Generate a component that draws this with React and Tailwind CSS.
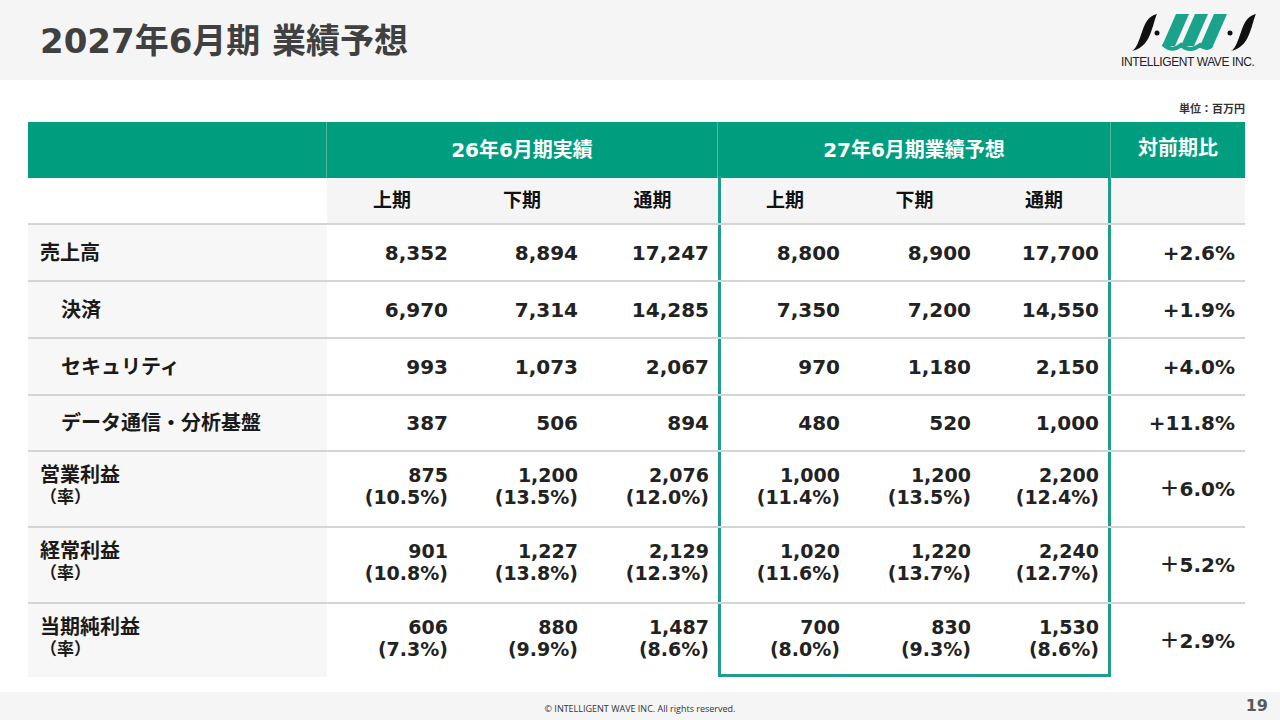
import React from 'react'

const COLS = 'grid grid-cols-[299px_130px_130px_131px_131px_131px_131px_134px]'

const rows = [
  { label: '売上高', h: 'h-[57px]', v: ['8,352', '8,894', '17,247', '8,800', '8,900', '17,700'], r: '+2.6%' },
  { label: '決済', indent: true, h: 'h-[57px]', v: ['6,970', '7,314', '14,285', '7,350', '7,200', '14,550'], r: '+1.9%' },
  { label: 'セキュリティ', indent: true, h: 'h-[57px]', v: ['993', '1,073', '2,067', '970', '1,180', '2,150'], r: '+4.0%' },
  { label: 'データ通信・分析基盤', indent: true, h: 'h-[56px]', v: ['387', '506', '894', '480', '520', '1,000'], r: '+11.8%' },
  {
    label: '営業利益', rate: true, h: 'h-[76px]',
    v: [['875', '(10.5%)'], ['1,200', '(13.5%)'], ['2,076', '(12.0%)'], ['1,000', '(11.4%)'], ['1,200', '(13.5%)'], ['2,200', '(12.4%)']],
    r: '＋6.0%',
  },
  {
    label: '経常利益', rate: true, h: 'h-[76px]',
    v: [['901', '(10.8%)'], ['1,227', '(13.8%)'], ['2,129', '(12.3%)'], ['1,020', '(11.6%)'], ['1,220', '(13.7%)'], ['2,240', '(12.7%)']],
    r: '＋5.2%',
  },
  {
    label: '当期純利益', rate: true, h: 'h-[75px]', last: true,
    v: [['606', '(7.3%)'], ['880', '(9.9%)'], ['1,487', '(8.6%)'], ['700', '(8.0%)'], ['830', '(9.3%)'], ['1,530', '(8.6%)']],
    r: '＋2.9%',
  },
]

const GREEN = '#1aa38a'

function Logo() {
  return (
    <div className='flex flex-col items-start w-[136px]'>
      <svg width='136' height='39' viewBox='1121 13 136 39'>
        {/* left slash + dot */}
        <path d='M1132,51 C1137,48 1139,40 1142,32 C1145,23 1148,16 1157,14 C1155,18 1154,24 1151,32 C1148,40 1144,48 1132,51 Z' fill='#111' />
        <circle cx='1157' cy='33' r='2.5' fill='#111' />
        {/* W */}
        <path d='M1176,14 L1189,14 L1175,46 L1162,46 Z' fill={GREEN} />
        <path d='M1195,14 L1208,14 L1194,46 L1181,46 Z' fill={GREEN} />
        <path d='M1214,14 L1227,14 L1213,46 L1200,46 Z' fill={GREEN} />
        <path d='M1163,44 Q1172,53 1181,45 Q1190,53 1200,45 Q1207,51 1212,45' stroke={GREEN} strokeWidth='4' fill='none' />
        {/* dot + right slash */}
        <circle cx='1230' cy='33' r='2.5' fill='#111' />
        <path d='M1231,51 C1236,48 1238,40 1241,32 C1244,23 1247,16 1256,14 C1254,18 1253,24 1250,32 C1247,40 1243,48 1231,51 Z' fill='#111' />
      </svg>
      <div className="mt-[4px] text-[12px] leading-none tracking-[-0.4px] text-[#222] font-['Liberation_Sans',sans-serif] font-normal whitespace-nowrap">
        INTELLIGENT WAVE INC.
      </div>
    </div>
  )
}

function NumCell({ val, teal, tealRight, last, top }) {
  const boxed = last && (teal || tealRight || top)
  let cls = 'flex flex-col items-end justify-center pr-[9px] text-[#222]'
  if (Array.isArray(val)) cls += boxed ? ' pb-[3px]' : ' pb-[6px]'
  if (teal) cls += ' border-l-[3px] border-l-[#1f9e8b]'
  if (tealRight) cls += ' border-r-[3px] border-r-[#1f9e8b] pr-[7px]'
  if (boxed) cls += ' border-b-[3px] border-b-[#1f9e8b]'
  return (
    <div className={cls}>
      {Array.isArray(val) ? (
        <>
          <span className='text-[19px] leading-[22px]'>{val[0]}</span>
          <span className='text-[19px] leading-[22px]'>{val[1]}</span>
        </>
      ) : (
        <span className='text-[20px] leading-[24px]'>{val}</span>
      )}
    </div>
  )
}

export default function App() {
  return (
    <div className="w-[1280px] h-[720px] flex flex-col bg-white font-['DejaVu_Sans','Noto_Sans_CJK_JP',sans-serif] font-bold overflow-hidden">
      {/* header */}
      <div className='h-[80px] shrink-0 bg-[#f5f5f5] flex items-center justify-between pl-[40px] pr-[23px]'>
        <h1 className='text-[34px] leading-none text-[#404040] mt-[2px]'>2027年6月期 業績予想</h1>
        <Logo />
      </div>

      <div className='h-[42px] shrink-0 flex items-end justify-end pr-[35px] pb-[7px]'>
        <span className="text-[11px] leading-[14px] text-[#333] font-['Noto_Sans_CJK_JP',sans-serif]">単位：百万円</span>
      </div>

      {/* table */}
      <div className='ml-[28px] w-[1217px]'>
        <div className={COLS + ' h-[56px] bg-[#009e7e] text-white text-[20px]'}>
          <div className='border-r border-[#4fb9a1]' />
          <div className='col-span-3 flex items-center justify-center border-r border-[#4fb9a1]'>26年6月期実績</div>
          <div className='col-span-3 flex items-center justify-center border-r border-[#4fb9a1]'>27年6月期業績予想</div>
          <div className='flex items-center justify-center pb-[4px]'>対前期比</div>
        </div>

        <div className={COLS + ' h-[45px] text-[19px] text-[#111]'}>
          <div className='bg-white' />
          {['上期', '下期', '通期'].map((t) => (
            <div key={'a' + t} className='bg-[#f5f5f5] flex items-center justify-center'>{t}</div>
          ))}
          {['上期', '下期', '通期'].map((t, i) => (
            <div
              key={'b' + t}
              className={
                'bg-[#f5f5f5] flex items-center justify-center' +
                (i === 0 ? ' border-l-[3px] border-l-[#1f9e8b]' : '') +
                (i === 2 ? ' border-r-[3px] border-r-[#1f9e8b]' : '')
              }
            >
              {t}
            </div>
          ))}
          <div className='bg-[#f5f5f5]' />
        </div>

        {rows.map((row) => (
          <div key={row.label} className={COLS + ' ' + row.h + ' border-t-2 border-[#d4d4d4]'}>
            <div className={'bg-[#f7f7f7] flex flex-col justify-center text-[#1a1a1a] ' + (row.indent ? 'pl-[33px]' : 'pl-[12px]') + (row.rate ? ' pb-[6px]' : '')}>
              {row.rate ? (
                <>
                  <span className='text-[20px] leading-[22px]'>{row.label}</span>
                  <span className='text-[17px] leading-[22px]'>（率）</span>
                </>
              ) : (
                <span className='text-[20px] leading-[24px]'>{row.label}</span>
              )}
            </div>
            {row.v.map((val, i) => (
              <NumCell
                key={i}
                val={val}
                teal={i === 3}
                tealRight={i === 5}
                top={i === 4}
                last={row.last}
              />
            ))}
            <div className='flex items-center justify-end pr-[10px] text-[20px] text-[#222]'>{row.r}</div>
          </div>
        ))}
      </div>

      <div className='flex-1' />

      {/* footer */}
      <div className='h-[28px] shrink-0 bg-[#f5f5f5] grid grid-cols-[1fr_auto_1fr] items-center'>
        <div />
        <div className="text-[9px] font-normal text-[#333] font-['Open_Sans',sans-serif] pt-[6px]">© INTELLIGENT WAVE INC. All rights reserved.</div>
        <div className='flex justify-end pr-[12px] text-[16px] text-[#595959]'>19</div>
      </div>
    </div>
  )
}
